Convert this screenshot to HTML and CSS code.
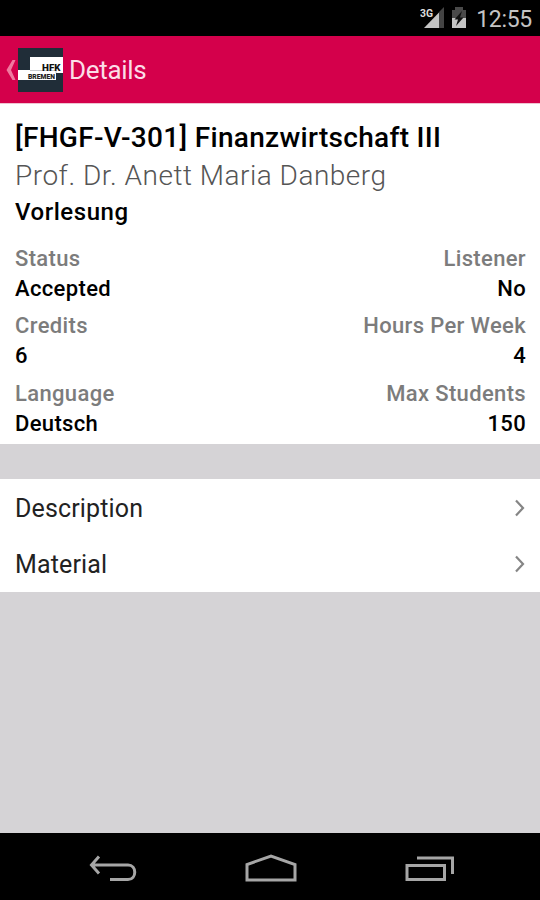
FILE: index.html
```html
<!DOCTYPE html>
<html lang="en">
<head>
  <meta charset="UTF-8" />
  <title>Details</title>
  <link rel="stylesheet" href="styles.css">
</head>
<body>
  <div class="status-bar">
    <svg class="signal" width="26" height="24" viewBox="0 0 26 24">
      <path d="M24 1V22H19V6Z" fill="#444" />
      <path d="M4 22L19 6.500V22Z" fill="#c4c4c4" />
      <text x="0" y="11" textLength="13" lengthAdjust="spacingAndGlyphs" class="network">3G</text>
    </svg>
    <svg class="battery" width="16" height="24" viewBox="0 0 16 24">
      <path d="M4 1H12V4H15V22H1V4H4Z" fill="#4a4a4a" />
      <path d="M1 12H15V22H1Z" fill="#c4c4c4" />
      <path d="M11 5L3.500 13.500H7L5 20L12.500 11.500H9Z" fill="#111" />
    </svg>
    <span class="clock">12:55</span>
  </div>

  <div class="header">
    <svg class="up" width="11" height="24" viewBox="0 0 11 24">
      <path d="M9.500 2H6.500L0.500 12L6.500 22H9.500L5 12Z" fill="#f0799f" />
    </svg>
    <svg class="logo" width="45" height="44" viewBox="0 0 45 44">
      <rect width="45" height="44" fill="#202d38" />
      <path d="M12 9H45V25H38V32H0V22H12Z" fill="#fff" />
      <path d="M12 22.500H38V25" fill="none" stroke="#b9bdc1" stroke-width="0.800" />
      <text x="24" y="22.500" textLength="18.500" lengthAdjust="spacingAndGlyphs" class="logo-top">HFK</text>
      <text x="10" y="30.500" textLength="27" lengthAdjust="spacingAndGlyphs" class="logo-bottom">BREMEN</text>
    </svg>
    <h1>Details</h1>
  </div>

  <div class="course">
    <h2>[FHGF-V-301] Finanzwirtschaft III</h2>
    <p class="lecturer">Prof. Dr. Anett Maria Danberg</p>
    <p class="type">Vorlesung</p>

    <div class="facts">
      <div class="row">
        <div><label>Status</label><span>Accepted</span></div>
        <div><label>Listener</label><span>No</span></div>
      </div>
      <div class="row">
        <div><label>Credits</label><span>6</span></div>
        <div><label>Hours Per Week</label><span>4</span></div>
      </div>
      <div class="row">
        <div><label>Language</label><span>Deutsch</span></div>
        <div><label>Max Students</label><span>150</span></div>
      </div>
    </div>
  </div>

  <div class="links">
    <div class="link">
      <span>Description</span>
      <svg width="11" height="18" viewBox="0 0 11 18"><path d="M2 1.500L9 9L2 16.500" /></svg>
    </div>
    <div class="link">
      <span>Material</span>
      <svg width="11" height="18" viewBox="0 0 11 18"><path d="M2 1.500L9 9L2 16.500" /></svg>
    </div>
  </div>

  <div class="nav-bar">
    <svg width="48" height="28" viewBox="0 0 48 28">
      <path d="M10 2.500L2.500 11L10 19.500M2.500 11H39C48 11 48 25.500 39 25.500H21" />
    </svg>
    <svg width="52" height="28" viewBox="0 0 52 28">
      <path d="M2 26V10.500L26 2L50 10.500V26Z" />
    </svg>
    <svg width="50" height="28" viewBox="0 0 50 28">
      <path d="M2 11.500H39.500V25.500H2ZM12 4H47.500V20" />
    </svg>
  </div>
</body>
</html>
```

FILE: styles.css
```css
body {
  margin: 0;
  height: 900px;
  display: flex;
  flex-direction: column;
  background: #d5d3d6;
  font-family: Roboto, "Liberation Sans", sans-serif;
  overflow: hidden;
}

h1, h2, p {
  margin: 0;
}

.status-bar {
  height: 36px;
  background: #000;
  display: flex;
  align-items: center;
  justify-content: flex-end;
  padding-right: 8px;
  box-sizing: border-box;
}

.signal {
  margin-right: 5px;
}

.battery {
  margin-right: 9px;
}

.network {
  font-size: 11px;
  font-weight: 700;
  fill: #ddd;
}

.clock {
  color: #c4c4c4;
  font-size: 23px;
  line-height: 36px;
  letter-spacing: -0.3px;
  padding-top: 3px;
}

.header {
  height: 68px;
  background: #d4004b;
  border-bottom: 1px solid #efc3d1;
  display: flex;
  align-items: center;
  padding-left: 6px;
  box-sizing: border-box;
}

.logo {
  margin: 0 6px 0 1px;
}

.logo-top {
  font-size: 9px;
  font-weight: 900;
  fill: #111;
}

.logo-bottom {
  font-size: 7px;
  font-weight: 900;
  fill: #222;
}

.header h1 {
  color: #fbdde7;
  font-size: 26px;
  font-weight: 400;
  line-height: 36px;
  letter-spacing: -0.3px;
  padding-top: 1px;
}

.course {
  background: #fff;
  height: 340px;
  padding: 15px 14px 0 15px;
  box-sizing: border-box;
}

.course h2 {
  font-size: 28px;
  font-weight: 500;
  line-height: 38px;
  letter-spacing: 0.31px;
  color: #000;
}

.lecturer {
  font-size: 28px;
  font-weight: 300;
  line-height: 38px;
  letter-spacing: 0.5px;
  color: #555;
}

.type {
  font-size: 24px;
  font-weight: 500;
  line-height: 34px;
  letter-spacing: 0.55px;
  color: #000;
}

.facts {
  margin-top: 14.5px;
  display: flex;
  flex-direction: column;
  gap: 7.5px;
}

.row {
  display: flex;
  justify-content: space-between;
  font-size: 22px;
  font-weight: 500;
  line-height: 30px;
  letter-spacing: 0.35px;
}

.row div:last-child {
  text-align: right;
}

.row label,
.row span {
  display: block;
}

.row label {
  color: #7c7c7c;
}

.links {
  margin-top: 35px;
  height: 113px;
  background: #fff;
}

.link {
  height: 56px;
  padding: 1px 15px 0 15px;
  box-sizing: border-box;
  display: flex;
  align-items: center;
  justify-content: space-between;
  font-size: 25px;
  letter-spacing: 0.15px;
  color: #222;
}

.link span {
  padding-top: 2px;
}

.link path {
  fill: none;
  stroke: #858585;
  stroke-width: 2.2;
}

.nav-bar {
  margin-top: auto;
  height: 67px;
  background: #000;
  display: flex;
  align-items: center;
  justify-content: space-between;
  padding: 3px 85px 0 89px;
  box-sizing: border-box;
}

.nav-bar path {
  fill: none;
  stroke: #a6a6a6;
  stroke-width: 3;
}
```
